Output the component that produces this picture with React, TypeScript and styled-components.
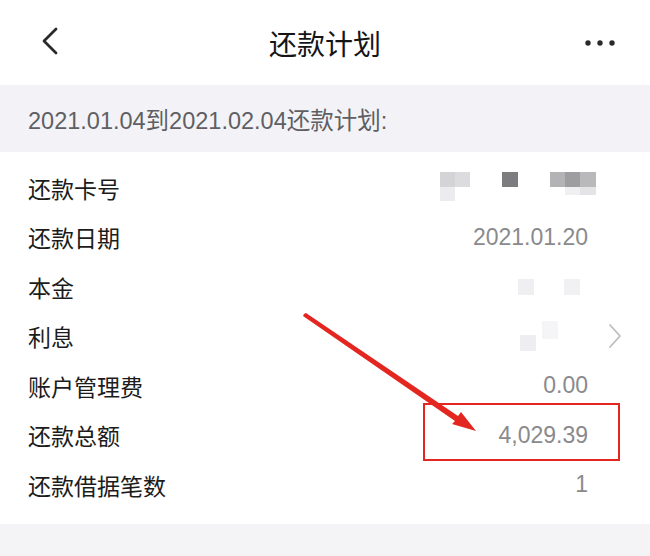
import React from 'react';
import styled, {createGlobalStyle} from 'styled-components';

const GlobalStyle = createGlobalStyle`
  html, body {
    margin: 0;
    padding: 0;
    background: #ffffff;
  }
  body {
    font-family: "Liberation Sans", "Noto Sans CJK SC", sans-serif;
  }
`;

const Page = styled.div`
  position: relative;
  width: 650px;
  height: 556px;
  overflow: hidden;
  background: #ffffff;
`;

const NavBar = styled.div`
  height: 85px;
  display: grid;
  grid-template-columns: 120px 1fr 120px;
  align-items: center;
  padding: 0 34px 0 40px;
  box-sizing: border-box;
`;

const Title = styled.div`
  text-align: center;
  font-family: "Noto Sans CJK SC", sans-serif;
  font-size: 28px;
  color: #151515;
  padding-right: 6px;
`;

const NavRight = styled.div`
  display: flex;
  justify-content: flex-end;
`;

const Period = styled.div`
  height: 67px;
  background: #f3f3f7;
  display: flex;
  align-items: center;
  padding: 0 28px;
  font-family: "Liberation Sans", "Noto Sans CJK SC", sans-serif;
  font-size: 23.5px;
  color: #5f5f63;
`;

const List = styled.div`
  padding: 11px 0 14px;
`;

const Row = styled.div`
  height: 49.5px;
  display: grid;
  grid-template-columns: 1fr auto 34px;
  align-items: center;
  padding: 0 28px;
`;

const Label = styled.div`
  font-family: "Noto Sans CJK SC", sans-serif;
  font-size: 23px;
  color: #1c1c1c;
`;

const Value = styled.div<{ $shift?: number }>`
  font-family: "Liberation Sans", sans-serif;
  font-size: 23px;
  color: #8a8a8c;
  text-align: right;
  margin-right: ${p => p.$shift ?? 0}px;
  display: flex;
  align-items: center;
  justify-content: flex-end;
`;

const Trail = styled.div`
  display: flex;
  justify-content: flex-end;
  align-items: center;
`;

const Footer = styled.div`
  height: 33px;
  background: #f4f4f6;
`;

const HighlightBox = styled.div`
  position: absolute;
  left: 423px;
  top: 403px;
  width: 197px;
  height: 58px;
  box-sizing: border-box;
  border: 2px solid #e42620;
  pointer-events: none;
`;

const Overlay = styled.svg`
  position: absolute;
  left: 0;
  top: 0;
  pointer-events: none;
`;

type Cell = [number, number, number, number, string];

const Mosaic = ({w, h, cells}: { w: number, h: number, cells: Cell[] }) => (
  <svg width={w} height={h} viewBox={`0 0 ${w} ${h}`}>
    {cells.map(([x, y, cw, ch, c], i) => (
      <rect key={i} x={x} y={y} width={cw} height={ch} fill={c}/>
    ))}
  </svg>
);

const cardCells: Cell[] = [
  [0, 0, 15, 15, '#d4d4d6'],
  [15, 0, 15, 15, '#dcdcde'],
  [0, 15, 15, 14, '#ececee'],
  [62, 0, 16, 15, '#7d7d7f'],
  [110, 0, 15, 15, '#b3b3b5'],
  [125, 0, 15, 15, '#9e9ea0'],
  [140, 0, 16, 15, '#b9b9bb'],
  [125, 15, 15, 8, '#f0f0f2'],
  [140, 15, 16, 8, '#e4e4e6'],
];

const principalCells: Cell[] = [
  [0, 0, 16, 16, '#efeff1'],
  [46, 0, 16, 16, '#f1f1f3'],
];

const interestCells: Cell[] = [
  [22, 0, 16, 18, '#f5f5f7'],
  [0, 14, 16, 16, '#eeeef0'],
];

const BackIcon = () => (
  <svg width="22" height="30" viewBox="0 0 22 30">
    <polyline points="16,3 4,15 16,27" fill="none" stroke="#2a2a2a" strokeWidth="2.8"
              strokeLinecap="round" strokeLinejoin="round"/>
  </svg>
);

const MoreIcon = () => (
  <svg width="32" height="8" viewBox="0 0 32 8">
    <circle cx="4" cy="4" r="2.7" fill="#2a2a2a"/>
    <circle cx="16" cy="4" r="2.7" fill="#2a2a2a"/>
    <circle cx="28" cy="4" r="2.7" fill="#2a2a2a"/>
  </svg>
);

const ChevronRight = () => (
  <svg width="14" height="26" viewBox="0 0 14 26">
    <polyline points="2,2 12,13 2,24" fill="none" stroke="#bdbdc0" strokeWidth="1.8"
              strokeLinecap="round" strokeLinejoin="round"/>
  </svg>
);

interface IRow {
  label: string,
  value?: React.ReactNode,
  shift?: number,
  trail?: React.ReactNode,
}

const rows: IRow[] = [
  {label: '还款卡号', value: <Mosaic w={156} h={32} cells={cardCells}/>, shift: -8},
  {label: '还款日期', value: '2021.01.20'},
  {label: '本金', value: <Mosaic w={62} h={16} cells={principalCells}/>, shift: 8},
  {label: '利息', value: <Mosaic w={40} h={30} cells={interestCells}/>, shift: 28, trail: <ChevronRight/>},
  {label: '账户管理费', value: '0.00'},
  {label: '还款总额', value: '4,029.39'},
  {label: '还款借据笔数', value: '1'},
];

const App = () => {
  return (
    <Page>
      <GlobalStyle/>
      <NavBar>
        <div><BackIcon/></div>
        <Title>还款计划</Title>
        <NavRight><MoreIcon/></NavRight>
      </NavBar>
      <Period>2021.01.04到2021.02.04还款计划:</Period>
      <List>
        {rows.map(r => (
          <Row key={r.label}>
            <Label>{r.label}</Label>
            <Value $shift={r.shift}>{r.value}</Value>
            <Trail>{r.trail}</Trail>
          </Row>
        ))}
      </List>
      <Footer/>
      <HighlightBox/>
      <Overlay width="650" height="556" viewBox="0 0 650 556">
        <polygon points="304,314 306,313 458,416 461,412 476,431 452,424 455,421 303,316" fill="#e42620"/>
      </Overlay>
    </Page>
  );
};

export default App;
